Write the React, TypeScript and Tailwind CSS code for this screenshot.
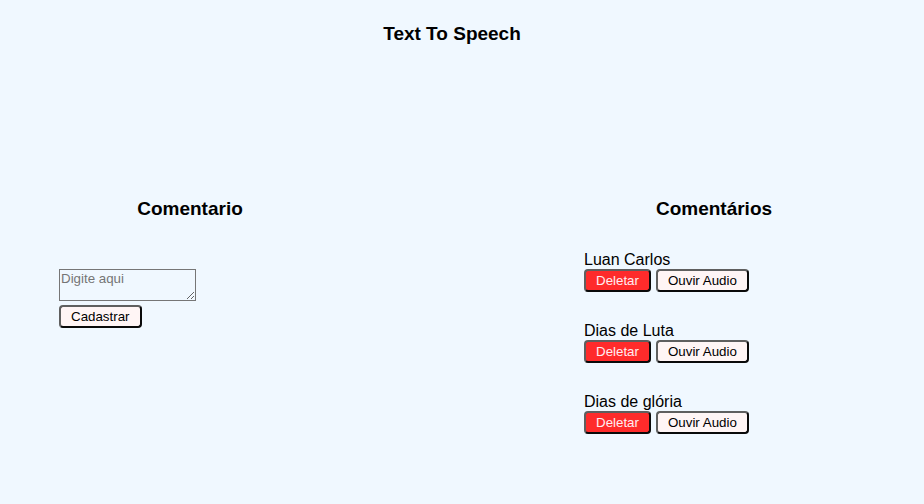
import React from "react";

const items = ["Luan Carlos", "Dias de Luta", "Dias de glória"];

const btn =
  "h-[23px] px-[10px] text-[13.33px] leading-[15px] rounded-[4px] border-2 [border-style:outset] border-[#5f5f5f]";

export default function App() {
  return (
    <div className="min-h-[504px] w-full bg-[#f0f8ff] text-black font-['Liberation_Sans',Arial,sans-serif]">
      <h1 className="pt-[23px] pr-[20px] text-center text-[19px] leading-[22px] font-bold">
        Text To Speech
      </h1>
      <div className="flex pl-[59px] pt-[153px] gap-[263px]">
        <div className="w-[262px] flex flex-col">
          <h2 className="text-center text-[19px] leading-[22px] font-bold">Comentario</h2>
          <textarea
            placeholder="Digite aqui"
            className="mt-[49px] w-[137px] h-[32px] border border-[#767676] bg-transparent p-[1px] text-[13.33px] leading-[15px] font-['Liberation_Sans',Arial,sans-serif] placeholder:text-[#757575] resize-y"
          />
          <div className="mt-[3px]">
            <button className={`${btn} bg-[#fff5f5] text-black`}>Cadastrar</button>
          </div>
        </div>
        <div className="w-[260px] flex flex-col">
          <h2 className="text-center text-[19px] leading-[22px] font-bold">Comentários</h2>
          <div className="mt-[30px] flex flex-col gap-[29px]">
            {items.map((t) => (
              <div key={t} className="flex flex-col">
                <p className="text-[16px] leading-[19px]">{t}</p>
                <div className="flex gap-[5px]">
                  <button className={`${btn} bg-[#ff2b2b] text-[#ffeef2]`}>Deletar</button>
                  <button className={`${btn} bg-[#fff5f5] text-black`}>Ouvir Audio</button>
                </div>
              </div>
            ))}
          </div>
        </div>
      </div>
    </div>
  );
}
